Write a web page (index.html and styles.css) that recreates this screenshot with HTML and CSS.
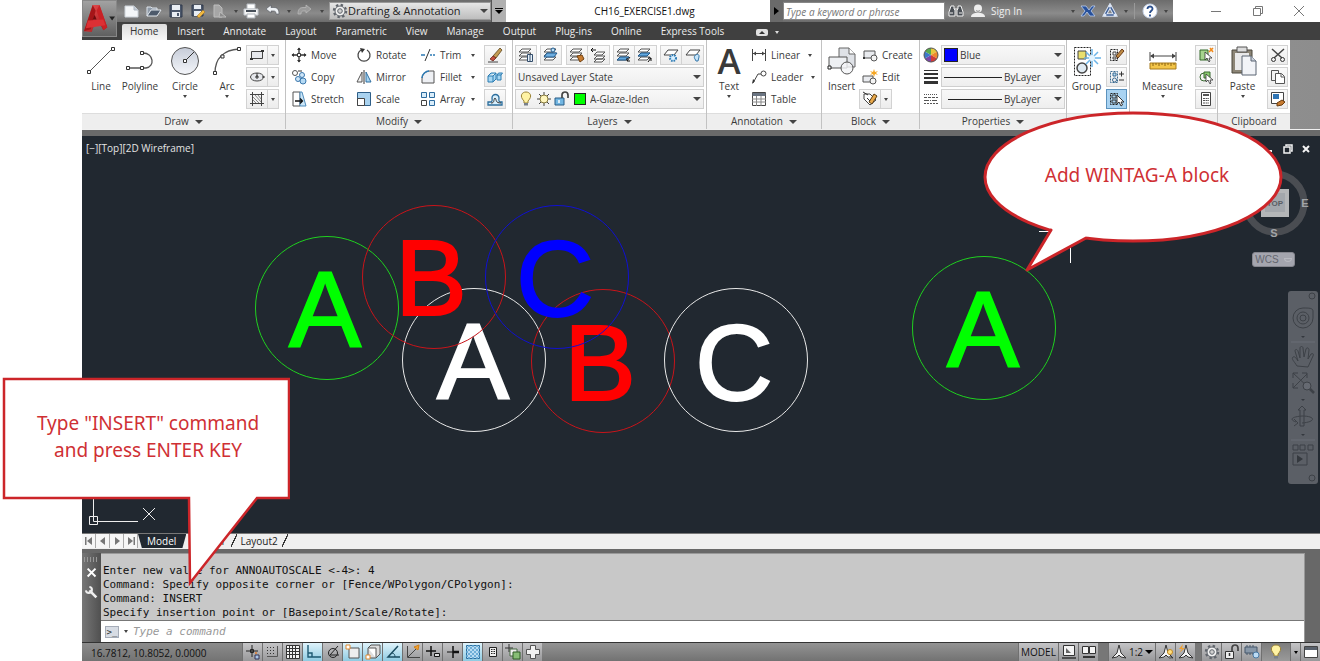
FILE: index.html
```html
<!DOCTYPE html>
<html lang="en">
<head>
<meta charset="utf-8">
<title>CH16_EXERCISE1.dwg</title>
<link rel="stylesheet" href="styles.css">
</head>
<body>
<svg class="defs" aria-hidden="true">
  <defs>
    <linearGradient id="gRed" x1="0" y1="0" x2="1" y2="1"><stop offset="0" stop-color="#f0585a"/><stop offset="1" stop-color="#9c0f12"/></linearGradient>
    <linearGradient id="gCirc" x1="0" y1="0" x2="0" y2="1"><stop offset="0" stop-color="#c6ccd8"/><stop offset="1" stop-color="#f4f6fa"/></linearGradient>
  </defs>
  <g>
    <symbol id="new" viewBox="0 0 16 16"><path d="M1 3h9l4 4v7H1z" fill="#f4f6f8" stroke="#ccd2d8"/><path d="M10 3v4h4" fill="#c2cad4" stroke="#aeb6c0"/></symbol>
    <symbol id="open" viewBox="0 0 16 16"><path d="M1 13V4h4l1 1h5v3" fill="#8f9aa8" stroke="#dde3ea"/><path d="M1 13l4-6h10l-4 6z" fill="#4d5a6b" stroke="#e4e9ef"/></symbol>
    <symbol id="save" viewBox="0 0 16 16"><path d="M2 2h12v12H2z" fill="#4c586c" stroke="#303b4c"/><path d="M4 2h8v5H4zM4 9h8v5H4z" fill="#e8edf3"/><path d="M9 10h2v3H9z" fill="#4c586c"/></symbol>
    <symbol id="saveas" viewBox="0 0 16 16"><path d="M2 2h11v11H2z" fill="#4c586c" stroke="#303b4c"/><path d="M4 2h7v4H4zM4 8h7v5H4z" fill="#e8edf3"/><path d="M7 13l6-6 2 2-6 6z" fill="#f0b840" stroke="#9a6a20" stroke-width=".5"/></symbol>
    <symbol id="plotdoc" viewBox="0 0 16 16"><path d="M2 2h5l3 3v9H2z" fill="#a6a6a6" stroke="#bdbdbd"/><path d="M8 9l6 5H7z" fill="#8c8c8c" stroke="#bbb"/></symbol>
    <symbol id="print" viewBox="0 0 16 16"><path d="M4 1h8v5H4z" fill="#fff" stroke="#b5bac0"/><path d="M1 6h14v6H1z" fill="#f4f4f4" stroke="#c4c9cf"/><path d="M3 7h10v2H3z" fill="#474f59"/><path d="M4 11h8v4H4z" fill="#fff" stroke="#abb0b6"/></symbol>
    <symbol id="undo" viewBox="0 0 16 16"><path d="M1 6l5-4v2.500h3c4 0 5 3 5 6.500h-3c0-2-.5-3-2.500-3H6V10z" fill="#eef1f4" stroke="#50565e" stroke-width=".6"/></symbol>
    <symbol id="redo" viewBox="0 0 16 16"><path d="M15 6l-5-4v2.500H7c-4 0-5 3-5 6.500h3c0-2 .5-3 2.500-3H10V10z" fill="#9a9a9a" stroke="#bdbdbd" stroke-width=".7"/></symbol>
    <symbol id="gear" viewBox="0 0 16 16"><circle cx="8" cy="8" r="6" stroke="#60656c" stroke-width="2.400" stroke-dasharray="2.350 2.350"/><circle cx="8" cy="8" r="5" fill="#f2f2f2" stroke="#60656c"/><circle cx="8" cy="8" r="2.300" fill="#d0d0d0" stroke="#60656c"/></symbol>
    <symbol id="binoc" viewBox="0 0 16 16"><path d="M3 3h3v3l1 1v6H1V9zM10 3h3l2 6v4H9V7l1-1z" fill="#4a4f55" stroke="#f2f2f2"/><path d="M6 6h4M2 10h3M11 10h3" stroke="#f2f2f2"/></symbol>
    <symbol id="person" viewBox="0 0 16 16"><circle cx="8" cy="5.500" r="4" fill="#eee"/><path d="M1 14c0-3 3-4 5-4h4c2 0 5 1 5 4z" fill="#eee"/><path d="M6 7.500c1 1 3 1 4 0" stroke="#888"/></symbol>
    <symbol id="exch" viewBox="0 0 16 16"><path d="M1 3h5l3 4 3-4h3l-4 5 4 5h-5L7 9l-3 4H1l4-5z" fill="#27509a" stroke="#b9cdf0" stroke-width=".8"/></symbol>
    <symbol id="a360" viewBox="0 0 16 16"><path d="M8 3L3 12h10z" stroke="#dce5f4" stroke-width="3.500"/><path d="M8 3L3 12h10z" stroke="#3f5f96" stroke-width="1.500"/><circle cx="8" cy="3" r="1.500" fill="#dce5f4"/><circle cx="3" cy="12" r="1.500" fill="#dce5f4"/><circle cx="13" cy="12" r="1.500" fill="#dce5f4"/></symbol>
    <symbol id="help" viewBox="0 0 16 16"><circle cx="8" cy="8" r="7" fill="#fff" stroke="#c7d4ea"/><path d="M5.500 6c0-3.500 5.300-3.300 5 0C10.300 7.800 8 7.800 8 10M8 11.500v2" stroke="#2a4f8e" stroke-width="1.900"/></symbol>

    <symbol id="line" viewBox="0 0 30 30"><path d="M3 26L26 3" stroke="#555"/><path d="M1.500 24.500h3v3h-3zM25.500 1.500h3v3h-3z" fill="#fff" stroke="#333"/></symbol>
    <symbol id="pline" viewBox="0 0 30 30"><path d="M3 22h18c9-1 8-15-3-15" stroke="#555" stroke-width="1.300"/><path d="M1.500 20.500h3v3h-3zM15.500 20.500h3v3h-3zM15.500 5.500h3v3h-3z" fill="#fff" stroke="#333"/></symbol>
    <symbol id="circle" viewBox="0 0 30 30"><circle cx="15" cy="15" r="13.500" fill="url(#gCirc)" stroke="#555"/><path d="M15 15l9-9" stroke="#333"/><path d="M13.500 13.500h3v3h-3z" fill="#fff" stroke="#333"/></symbol>
    <symbol id="arc" viewBox="0 0 30 30"><path d="M3 27C3 12 12 4 27 3" stroke="#555" stroke-width="1.300"/><path d="M1.500 25.500h3v3h-3zM9 9h3v3H9zM25.500 1.500h3v3h-3z" fill="#fff" stroke="#333"/></symbol>
    <symbol id="rect" viewBox="0 0 16 16"><path d="M2.500 4.500h11v7h-11z" fill="#e6e8ec" stroke="#444"/><path d="M1 11h3v2H1zM12 3h3v2h-3z" fill="#333"/></symbol>
    <symbol id="ellipse" viewBox="0 0 16 16"><ellipse cx="8" cy="8" rx="6.500" ry="4" fill="#e6e8ec" stroke="#444"/><path d="M8 8V4M6 8h4M8 6v4M13 8h3" stroke="#333"/></symbol>
    <symbol id="hatch" viewBox="0 0 16 16"><path d="M1 3.500h14M1 12.500h14M3.500 1v14M12.500 1v14" stroke="#444"/><path d="M4 6l6 6M4 9l3 3M6 4l6 7M9 4l3 4" stroke="#888"/></symbol>
    <symbol id="move" viewBox="0 0 16 16"><path d="M8 1v5M8 10v5M1 8h5M10 8h5" stroke="#333" stroke-width="1.300"/><path d="M6 3l2-2.500L10 3zM6 13l2 2.500 2-2.500zM3 6L.5 8 3 10zM13 6l2.500 2-2.500 2z" fill="#333"/><path d="M6.500 6.500h3v3h-3z" fill="#fff" stroke="#333"/></symbol>
    <symbol id="copy" viewBox="0 0 16 16"><circle cx="4" cy="4" r="2.500" stroke="#555"/><circle cx="11" cy="6" r="2.500" fill="#cfe6f8" stroke="#3b78ad"/><circle cx="7" cy="10" r="2.500" fill="#cfe6f8" stroke="#3b78ad"/><circle cx="12" cy="12" r="3" fill="#b5daf4" stroke="#3b78ad"/><path d="M7 2h4" stroke="#333"/></symbol>
    <symbol id="stretch" viewBox="0 0 16 16"><path d="M2 1h7v14H2z" fill="#fff" stroke="#555"/><path d="M9 1h2l4 14H9z" fill="#cde7f8" stroke="#4d8bbb"/><path d="M4 10h7M9 7.500l2.500 2.500L9 12.500" stroke="#111" stroke-width="1.300"/></symbol>
    <symbol id="rotate" viewBox="0 0 16 16"><path d="M5 3a6 6 0 1 0 6 0" stroke="#444" stroke-width="1.300"/><path d="M4 1l5 1-3 4z" fill="#333"/></symbol>
    <symbol id="mirror" viewBox="0 0 16 16"><path d="M6 3v10H1z" fill="#f4f4f4" stroke="#555"/><path d="M10 3v10h5z" fill="#a7d5f2" stroke="#2f6ea0"/><path d="M8 1v14" stroke="#333"/></symbol>
    <symbol id="scale" viewBox="0 0 16 16"><path d="M1.500 1.500h13v13h-13z" fill="#a9d2ef" stroke="#2f5f88"/><path d="M1.500 7.500h7v7h-7z" fill="#fff" stroke="#444"/></symbol>
    <symbol id="trim" viewBox="0 0 16 16"><path d="M1 8h4M10 8h2M13 8h2" stroke="#2c7ab4" stroke-width="1.400"/><path d="M5 14L10 2" stroke="#333"/></symbol>
    <symbol id="fillet" viewBox="0 0 16 16"><path d="M2 14V10c0-5 4-8 8-8h4v12z" fill="#eef0f4" stroke="#555"/><path d="M2 9c0-4 4-7 7-7" stroke="#2c7ab4" stroke-width="1.600"/></symbol>
    <symbol id="array" viewBox="0 0 16 16"><g fill="#d9edfa" stroke="#2c6b9e"><path d="M1.500 1.500h5v5h-5zM9.500 1.500h5v5h-5zM9.500 9.500h5v5h-5z"/><path d="M1.500 9.500h5v5h-5z" fill="#fff" stroke="#444"/></g></symbol>
    <symbol id="erase" viewBox="0 0 16 16"><path d="M13 1l2 2-6 8-3-2z" fill="#c39a52" stroke="#5c451c" stroke-width=".8"/><path d="M6 9l3 2-3 3-3-2z" fill="#c2503e" stroke="#70251b" stroke-width=".8"/><path d="M1 15h10" stroke="#444"/></symbol>
    <symbol id="explode" viewBox="0 0 16 16"><g fill="#a7d7f3" stroke="#2b7cb2"><path d="M1 7h5v6H1zM6 7l3-3v6l-3 3M1 7l3-3h5"/><path d="M10 6h4v5h-4zM14 6l1.500-2h-4L10 6"/></g></symbol>
    <symbol id="offset" viewBox="0 0 16 16"><path d="M1 14v-3h3c2-1 1-2 1-4a3.500 3.500 0 0 1 7 0c0 2-1 3 1 4h2v3z" fill="#d8effc" stroke="#2b6d9c" stroke-width="1.300"/><path d="M4 12c4 0 2-3 4-5 2 2 0 5 6 5" stroke="#333"/></symbol>
    <symbol id="layers" viewBox="0 0 16 16"><path d="M4 2h9l-3 3H1zM4 6h9l-3 3H1zM4 10h9l-3 3H1z" fill="#fff" stroke="#555"/></symbol>
    <symbol id="lprops" viewBox="0 0 16 16"><use href="#layers"/><path d="M9.500 7.500h5v7h-5z" fill="#e8f2fa" stroke="#334d6b"/><path d="M11 9h2M11 11h2M11 13h2" stroke="#334d6b"/></symbol>
    <symbol id="lcur" viewBox="0 0 16 16"><use href="#layers"/><path d="M4 6h10l-3 4H1z" fill="#6eaee0" stroke="#205a8e"/><circle cx="10" cy="3" r="2" fill="#bde0f7" stroke="#205a8e"/></symbol>
    <symbol id="lmatch" viewBox="0 0 16 16"><use href="#layers"/><path d="M8 9l5-1 2 4-4 3z" fill="#c77b30" stroke="#71400f"/></symbol>
    <symbol id="lprev" viewBox="0 0 16 16"><path d="M7 5h8l-3 3H4zM7 9h8l-3 3H4zM7 12h8l-3 3H4z" fill="#fff" stroke="#555"/><path d="M1 3h5M3 1L1 3l2 2" stroke="#111"/></symbol>
    <symbol id="liso" viewBox="0 0 16 16"><use href="#layers"/><path d="M4 10h9l-3 3H1z" fill="#64aae0" stroke="#205a8e"/><path d="M14 10l-3 4m0-3v3h3" stroke="#111"/></symbol>
    <symbol id="luniso" viewBox="0 0 16 16"><use href="#layers"/><path d="M4 6h9l-3 3H1z" fill="#64aae0" stroke="#205a8e"/><path d="M11 15l3-4m-3 0h3v3" stroke="#111"/></symbol>
    <symbol id="lfrz" viewBox="0 0 16 16"><path d="M5 3h10l-4 5H1z" fill="#fff" stroke="#444"/><circle cx="10" cy="11" r="3" fill="#d9f0ff" stroke="#2c7ab4" stroke-width="2" stroke-dasharray="1.500 1"/></symbol>
    <symbol id="loff" viewBox="0 0 16 16"><path d="M5 3h10l-4 5H1z" fill="#fff" stroke="#444"/><path d="M10 12c-3-4 5-7 4-2l-1 4h-2z" fill="#c7e5fa" stroke="#3477aa"/></symbol>
    <symbol id="bulb" viewBox="0 0 16 16"><path d="M6 10C1 5 4 1 8 1s7 4 2 9v2H6z" fill="#fff3a4" stroke="#9a8234"/><path d="M6 12h4v2.500H6z" fill="#78808a"/></symbol>
    <symbol id="sun" viewBox="0 0 16 16"><path d="M8 1v14M1 8h14M3 3l10 10M13 3L3 13" stroke="#444"/><circle cx="8" cy="8" r="4" fill="#fff6bd" stroke="#887b3c"/></symbol>
    <symbol id="unlock" viewBox="0 0 16 16"><path d="M1 7h9v7H1z" fill="#72b6e2" stroke="#285d86"/><path d="M8 7V4c0-4 6-4 6 0v3" stroke="#444" stroke-width="1.700"/><path d="M5 9v3" stroke="#fff" stroke-width="1.500"/></symbol>
    <symbol id="dim" viewBox="0 0 16 16"><path d="M1.500 2v12M14.500 2v12M2 6.500h12" stroke="#444"/><path d="M2 6.500l3-2v4zM14 6.500l-3-2v4z" fill="#444"/></symbol>
    <symbol id="leader" viewBox="0 0 16 16"><circle cx="12.500" cy="4.500" r="2.500" stroke="#444"/><path d="M10 5H7L2 14" stroke="#444"/><path d="M1 15l1-5 2 2z" fill="#333"/></symbol>
    <symbol id="table" viewBox="0 0 16 16"><path d="M1.500 1.500h13v13h-13z" fill="#fff" stroke="#444"/><path d="M1.500 2h13v3h-13z" fill="#6a7482"/><path d="M1 8h14M1 11h14M5.500 5v10M10 5v10" stroke="#888"/></symbol>
    <symbol id="insert" viewBox="0 0 30 30"><path d="M12 2h10l6 6v13H12z" fill="#dfe2e7" stroke="#666"/><path d="M22 2v6h6" fill="#fff" stroke="#666"/><path d="M2 11h18v11H2z" fill="#eef0f3" stroke="#555"/><circle cx="20" cy="22" r="6" fill="#f4f5f8" fill-opacity=".8" stroke="#555"/><path d="M1 20h3v3H1z" fill="#fff" stroke="#222"/></symbol>
    <symbol id="create" viewBox="0 0 16 16"><path d="M2 4h11v7H2z" fill="#e9ebef" stroke="#555"/><circle cx="12" cy="11" r="3" fill="#f4f4f4" stroke="#555"/><path d="M1 10h2v2H1z" fill="#333"/></symbol>
    <symbol id="bedit" viewBox="0 0 16 16"><path d="M1 7h10v6H1z" fill="#e9ebef" stroke="#555"/><circle cx="11" cy="12" r="3" fill="#f4f4f4" stroke="#555"/><path d="M12 0l1 3 3-1-2 2 2 2-3-1-1 3-1-3-3 1 2-2-2-2 3 1z" fill="#f5a623"/></symbol>
    <symbol id="attr" viewBox="0 0 16 16"><path d="M2 3h6l6 6-6 5-6-6z" fill="#fff" stroke="#444"/><path d="M7 11l5-8 3 2-5 8z" fill="#e9a94b" stroke="#5a3d12"/><path d="M1 1l5 3M5 7l3 3" stroke="#333"/></symbol>
    <symbol id="wheel" viewBox="0 0 16 16"><path d="M8 8V1a7 7 0 0 1 6 3.500z" fill="#e7c63c"/><path d="M8 8l6-3.500a7 7 0 0 1 0 7z" fill="#ee8a2c"/><path d="M8 8l6 3.500A7 7 0 0 1 8 15z" fill="#d13b38"/><path d="M8 8v7a7 7 0 0 1-6-3.500z" fill="#7a46a8"/><path d="M8 8l-6 3.500a7 7 0 0 1 0-7z" fill="#3c78c8"/><path d="M8 8L2 4.500A7 7 0 0 1 8 1z" fill="#58a84c"/><circle cx="8" cy="8" r="7" stroke="#555"/></symbol>
    <symbol id="lw" viewBox="0 0 16 16"><path d="M1 1.500h14" stroke="#333"/><path d="M1 5h14" stroke="#333" stroke-width="2"/><path d="M1 9h14" stroke="#333" stroke-width="2"/><path d="M1 13.500h14" stroke="#333" stroke-width="3"/></symbol>
    <symbol id="lt" viewBox="0 0 16 16"><path d="M1 3.500h14" stroke="#555" stroke-dasharray="1 1"/><path d="M1 6.500h14" stroke="#555" stroke-dasharray="3 1"/><path d="M1 9.500h14" stroke="#555" stroke-dasharray="5 1 1 1"/><path d="M1 12.500h14" stroke="#555" stroke-dasharray="2 1"/></symbol>
    <symbol id="group" viewBox="0 0 30 30"><path d="M2.500 1.500h16v28h-16z" stroke="#222" stroke-dasharray="2 1"/><path d="M6 5h8v8H6z" fill="#e9df6e" stroke="#444"/><circle cx="10" cy="22" r="5" fill="#dfeaf2" stroke="#444" stroke-width="1.500"/><path d="M20 3v18M12 12h17M14 6l12 12M26 6L14 18" stroke="#6bb4e8" stroke-width="1.500"/><circle cx="20" cy="12" r="3" fill="#e4f4ff"/></symbol>
    <symbol id="gedit" viewBox="0 0 16 16"><path d="M1.500 2.500h7v11h-7z" stroke="#222" stroke-dasharray="2 1"/><path d="M4 5h3v3H4zM4 10h3v2H4z" stroke="#444"/><path d="M7 9l6-7 2 2-6 7z" fill="#bd8a42" stroke="#6b3c1a"/></symbol>
    <symbol id="gpm" viewBox="0 0 16 16"><path d="M1.500 2.500h7v11h-7z" stroke="#3b6a90" stroke-dasharray="2 1"/><path d="M4 4h3v3H4z" fill="#b8dcf5" stroke="#3b6a90"/><circle cx="5.500" cy="11" r="2" stroke="#3b6a90"/><path d="M10 5h5M12.500 2.500v5M10 11h5" stroke="#333"/></symbol>
    <symbol id="gsel" viewBox="0 0 16 16"><path d="M1.500 2.500h7v11h-7z" stroke="#222" stroke-dasharray="2 1"/><path d="M3 4h4v3H3zM3 9h4v3H3z" stroke="#333"/><path d="M8 4v9l2-2 2 4 1.500-1-1.500-3h3z" fill="#fff" stroke="#333"/></symbol>
    <symbol id="measure" viewBox="0 0 30 30"><path d="M2 6v9M28 6v9M3 10h24" stroke="#444"/><path d="M2 10l4-2.500v5zM28 10l-4-2.500v5z" fill="#444"/><path d="M2 17h26v6H2z" fill="#f3c548" stroke="#a87a1a"/><path d="M5 17v3M8 17v2M11 17v3M14 17v2M17 17v3M20 17v2M23 17v3M26 17v2" stroke="#8a6210"/></symbol>
    <symbol id="qsel" viewBox="0 0 16 16"><path d="M2 3h8v10H2z" fill="#a6d48e" stroke="#356b2a"/><path d="M7 5v8l2-2 2 4 1-1-1-3h3z" fill="#fff" stroke="#333" stroke-width=".8"/><path d="M12 1l3 4M15 1l-4 4" stroke="#f08a1c" stroke-width="1.500"/></symbol>
    <symbol id="qall" viewBox="0 0 16 16"><circle cx="6" cy="8" r="4" stroke="#3a6a30"/><path d="M6 3h6v6H6z" fill="#8ccc70" stroke="#3a6a30"/><path d="M8 5v8l2-2 2 4 1-1-1-3h3z" fill="#fff" stroke="#333" stroke-width=".8"/></symbol>
    <symbol id="calc" viewBox="0 0 16 16"><path d="M3.500 1.500h9v13h-9z" fill="#fff" stroke="#444"/><path d="M5 4h6" stroke="#555" stroke-width="2"/><path d="M5 7.500h6M5 9.500h6M5 12h6" stroke="#555" stroke-dasharray="2 .6"/></symbol>
    <symbol id="paste" viewBox="0 0 30 30"><path d="M4 4h20v23H4z" fill="#8c8576" stroke="#4a463c"/><path d="M9 1h10v5H9z" fill="#ddd" stroke="#555"/><path d="M7 7h14v17H7z" fill="#e9e9ea"/><path d="M14 10h9l5 5v14H14z" fill="#f2f4f8" stroke="#5b6472"/><path d="M23 10v5h5" fill="#ccd3de" stroke="#5b6472"/></symbol>
    <symbol id="cut" viewBox="0 0 16 16"><path d="M2 2l10 9M14 2L4 11" stroke="#444" stroke-width="1.500"/><circle cx="3.500" cy="12.500" r="2" stroke="#333"/><circle cx="12.500" cy="12.500" r="2" stroke="#333"/></symbol>
    <symbol id="copyc" viewBox="0 0 16 16"><path d="M1.500 1.500h7v10h-7z" fill="#f4f4f4" stroke="#555"/><path d="M5.500 4.500h6l3 3v7h-9z" fill="#fff" stroke="#555"/><path d="M11 5v3h3" stroke="#555"/></symbol>
    <symbol id="matchp" viewBox="0 0 16 16"><path d="M1.500 1.500h12v11h-12z" fill="#fff" stroke="#444"/><path d="M3 3h6v5H3z" fill="#2e74b4"/><path d="M7 12l5-3 3 2-3 3-5 1z" fill="#c77b30" stroke="#6b3c0f"/></symbol>

    <symbol id="s1" viewBox="0 0 16 16"><path d="M7 1v12M1 7h12" stroke="#222"/><path d="M5.500 5.500h3v3h-3z" stroke="#222"/><circle cx="11" cy="9" r="1" fill="#e07c30"/><path d="M10 11h4v4h-4z" fill="#a9c5e8" stroke="#335"/></symbol>
    <symbol id="s2" viewBox="0 0 16 16"><path d="M2 3.500h9M2 6.500h9M2 9.500h9" stroke="#333" stroke-dasharray="1 2"/><path d="M12.500 2v10.500H2" stroke="#555"/></symbol>
    <symbol id="s3" viewBox="0 0 16 16"><path d="M1.500 1.500h13v13h-13z" fill="#f4f4f4" stroke="#333"/><path d="M1 4.500h14M1 7.500h14M1 10.500h14M4.500 1v14M7.500 1v14M10.500 1v14" stroke="#333"/></symbol>
    <symbol id="s4" viewBox="0 0 16 16"><path d="M3 1v12h13M3 9h4v4" stroke="#1d5972" stroke-width="1.400"/></symbol>
    <symbol id="s5" viewBox="0 0 16 16"><path d="M13 2L5 11h9" stroke="#222"/><circle cx="8" cy="9" r="4.500" stroke="#222"/></symbol>
    <symbol id="s6" viewBox="0 0 16 16"><path d="M4 4h10v10H4z" fill="#eee" stroke="#555"/><path d="M1 1h4v4H1z" fill="#fff" stroke="#df8a32"/></symbol>
    <symbol id="s7" viewBox="0 0 16 16"><path d="M3 4l3-3h9v9l-4 4H3z" fill="#ddd" stroke="#555"/><path d="M3 4h8v10" fill="#fff" stroke="#555"/><path d="M1 11h4v4H1z" fill="#fff" stroke="#df8a32"/></symbol>
    <symbol id="s8" viewBox="0 0 16 16"><path d="M13 2L3 13h12" stroke="#1b4c60" stroke-width="1.500"/><path d="M7 9c2 0 3 2 3 4" stroke="#1b4c60"/></symbol>
    <symbol id="s9" viewBox="0 0 16 16"><path d="M2.500 2v11.500H15M3 13l8-8" stroke="#444"/><path d="M9 3l5-2-1 5z" fill="#f0a030" stroke="#d08018"/></symbol>
    <symbol id="s10" viewBox="0 0 16 16"><path d="M6 2v10M1 7h10" stroke="#111" stroke-width="1.500"/><path d="M9.500 9.500h5v3h-5z" fill="#ddd" stroke="#111"/></symbol>
    <symbol id="s11" viewBox="0 0 16 16"><path d="M8 2v12" stroke="#111" stroke-width="1.500"/><path d="M2 8h6" stroke="#111"/><path d="M8 8h6" stroke="#111" stroke-width="2.500"/></symbol>
    <symbol id="s12" viewBox="0 0 16 16"><path d="M1.500 1.500h13v13h-13z" fill="#b9dcf2" stroke="#2c6f9e"/><path d="M1 5l4-4M1 9l8-8M1 13l12-12M3 15L15 3M7 15l8-8M11 15l4-4M11 1l4 4M7 1l8 8M3 1l12 12M1 3l12 12M1 7l8 8M1 11l4 4" stroke="#5aa2cf" stroke-width=".8"/></symbol>
    <symbol id="s13" viewBox="0 0 16 16"><path d="M4.500 3.500h7v9h-7z" fill="#eee" stroke="#222"/><path d="M6 5.500h4M6 7.500h4M6 9.500h4" stroke="#222" stroke-dasharray="1 .5"/></symbol>
    <symbol id="s14" viewBox="0 0 16 16"><path d="M4 0v8M0 4h8" stroke="#333"/><path d="M5 5h7v7H5z" fill="#eee" stroke="#476b42"/><path d="M8 8h7v7H8z" fill="#87bd76" stroke="#2f5c27"/></symbol>
    <symbol id="s15" viewBox="0 0 16 16"><path d="M5.500 1.500h5v4h4v5h-4v4h-5v-4h-4v-5h4z" fill="#f2f2f2" stroke="#555"/></symbol>
    <symbol id="m1" viewBox="0 0 16 16"><path d="M2.500 1.500h11v10h-11z" fill="#f4f4f4" stroke="#333"/><path d="M5 4l5 5H5z" fill="#666"/><path d="M1 14h14" stroke="#333" stroke-width="1.500"/></symbol>
    <symbol id="m2" viewBox="0 0 16 16"><path d="M1.500 2.500h6v7h-6zM8.500 2.500h6v7h-6z" fill="#f4f4f4" stroke="#333"/><path d="M2 13h12" stroke="#333" stroke-width="2"/></symbol>
    <symbol id="anno" viewBox="0 0 16 16"><path d="M8 1l2 8 5 5-5-1-2-2-2 2-5 1 5-5z" fill="#f6f6f6" stroke="#333"/></symbol>
    <symbol id="anno2" viewBox="0 0 16 16"><use href="#anno"/><circle cx="12" cy="8" r="2.500" fill="#ffe080" stroke="#c68a20"/><path d="M11 12h2v3h-2z" fill="#777"/></symbol>
    <symbol id="anno3" viewBox="0 0 16 16"><use href="#anno"/><path d="M5 0L1 5h3L1 9l6-5H4z" fill="#f0a030"/></symbol>
    <symbol id="chip" viewBox="0 0 16 16"><path d="M1 3h12v6H1z" fill="#8797a8" stroke="#44576a"/><path d="M3 1v10M6 1v10M9 1v10" stroke="#44576a" stroke-dasharray="2 6"/><circle cx="12" cy="11" r="3" fill="#bcdcf5" stroke="#4a7aa4"/></symbol>
    <symbol id="lock2" viewBox="0 0 16 16"><path d="M1.500 7.500h8v7h-8z" fill="#eee" stroke="#333"/><path d="M8 7V4c0-4 6-4 6 0v3" stroke="#444" stroke-width="1.700"/><path d="M5.500 9v3" stroke="#333" stroke-width="1.500"/></symbol>
    <symbol id="clean" viewBox="0 0 16 16"><path d="M1.500 2.500h13v11h-13z" fill="#fff" stroke="#444"/><path d="M2 3h12v3H2z" fill="#59616c"/></symbol>
    <symbol id="wrench" viewBox="0 0 16 16"><path d="M5 5l8 8" stroke="#eee" stroke-width="3"/><path d="M5 1a3.500 3.500 0 1 1-4 4" stroke="#eee" stroke-width="2.200"/></symbol>
  </g>
</svg>

<main class="app">
  <header class="head">
    <button class="appbtn" aria-label="Application menu"><svg viewBox="0 0 34 37"><path d="M1 31L10 4h7l8 23-4 3-4-7-5 1-3 8z" fill="url(#gRed)"/><path d="M1 31l9-27 3 6-5 19z" fill="#a51518"/><path d="M17 4l8 23-4 3-7-20z" fill="#c92125"/><path d="M5 20l16-1 2 6-20 3z" fill="#dc3034"/><path d="M12 14l2 5h-4z" fill="#6e0c0e"/><path d="M27 16h6l-3 4z" fill="#222"/></svg></button>
    <div class="headrows">
      <div class="titlebar">
        <div class="qat">
          <button class="ib" aria-label="New"><svg><use href="#new"/></svg></button>
          <button class="ib" aria-label="Open"><svg><use href="#open"/></svg></button>
          <button class="ib" aria-label="Save"><svg><use href="#save"/></svg></button>
          <button class="ib" aria-label="Save as"><svg><use href="#saveas"/></svg></button>
          <button class="ib" aria-label="Publish"><svg><use href="#plotdoc"/></svg></button>
          <span class="slot"><i class="arr"></i></span>
          <button class="ib" aria-label="Plot"><svg><use href="#print"/></svg></button>
          <button class="ib" aria-label="Undo"><svg><use href="#undo"/></svg></button>
          <span class="slot"><i class="arr"></i></span>
          <button class="ib" aria-label="Redo"><svg><use href="#redo"/></svg></button>
          <span class="slot wide"><i class="arr"></i></span>
        </div>
        <label class="workspace"><svg><use href="#gear"/></svg><select aria-label="Workspace"><option>Drafting &amp; Annotation</option></select><i class="arr big"></i></label>
        <button class="qmore" aria-label="Customize"><i class="bar"></i><i class="arr big"></i></button>
        <h1 class="doc">CH16_EXERCISE1.dwg</h1>
        <button class="sarrow" aria-label="Expand search"><i class="rt"></i></button>
        <input class="search" type="text" placeholder="Type a keyword or phrase" aria-label="Search">
        <div class="info">
          <button class="ib" aria-label="Find"><svg><use href="#binoc"/></svg></button>
          <button class="sign"><svg><use href="#person"/></svg>Sign In</button>
          <span class="slot push"><i class="arr"></i></span>
          <button class="ib" aria-label="Exchange"><svg><use href="#exch"/></svg></button>
          <button class="ib" aria-label="Autodesk 360"><svg><use href="#a360"/></svg></button>
          <span class="slot"><i class="arr"></i></span>
          <i class="vsep"></i>
          <button class="ib" aria-label="Help"><svg><use href="#help"/></svg></button>
          <span class="slot"><i class="arr"></i></span>
        </div>
        <div class="win">
          <button aria-label="Minimize"><svg viewBox="0 0 16 16"><path d="M3 8.500h10"/></svg></button>
          <button aria-label="Restore"><svg viewBox="0 0 16 16"><path d="M3.500 5.500h7v7h-7zM5.500 5V3.500h7v7H11"/></svg></button>
          <button aria-label="Close"><svg viewBox="0 0 16 16"><path d="M3 3l10 10M13 3L3 13"/></svg></button>
        </div>
      </div>
      <nav class="tabs">
        <a href="#" class="on">Home</a><a href="#">Insert</a><a href="#">Annotate</a><a href="#">Layout</a><a href="#">Parametric</a><a href="#">View</a><a href="#">Manage</a><a href="#">Output</a><a href="#">Plug-ins</a><a href="#">Online</a><a href="#">Express Tools</a>
        <button class="mini" aria-label="Minimize ribbon"><i class="pill"><i class="up"></i></i><i class="arr lt"></i></button>
      </nav>
    </div>
  </header>

  <section class="ribbon">
    <section class="panel draw">
      <div class="pbody">
        <button class="bigb"><svg><use href="#line"/></svg>Line</button>
        <button class="bigb"><svg><use href="#pline"/></svg>Polyline</button>
        <button class="bigb"><svg><use href="#circle"/></svg>Circle<i class="arr"></i></button>
        <button class="bigb"><svg><use href="#arc"/></svg>Arc<i class="arr"></i></button>
        <div class="stack">
          <button class="box split" aria-label="Rectangle"><svg><use href="#rect"/></svg><i class="arr"></i></button>
          <button class="box split" aria-label="Ellipse"><svg><use href="#ellipse"/></svg><i class="arr"></i></button>
          <button class="box split" aria-label="Hatch"><svg><use href="#hatch"/></svg><i class="arr"></i></button>
        </div>
      </div>
      <h2>Draw<i class="arr big"></i></h2>
    </section>
    <section class="panel modify">
      <div class="pbody">
        <div class="stack">
          <button class="tool"><svg><use href="#move"/></svg>Move</button>
          <button class="tool"><svg><use href="#copy"/></svg>Copy</button>
          <button class="tool"><svg><use href="#stretch"/></svg>Stretch</button>
        </div>
        <div class="stack">
          <button class="tool"><svg><use href="#rotate"/></svg>Rotate</button>
          <button class="tool"><svg><use href="#mirror"/></svg>Mirror</button>
          <button class="tool"><svg><use href="#scale"/></svg>Scale</button>
        </div>
        <div class="stack">
          <button class="tool"><svg><use href="#trim"/></svg>Trim<i class="arr end"></i></button>
          <button class="tool"><svg><use href="#fillet"/></svg>Fillet<i class="arr end"></i></button>
          <button class="tool"><svg><use href="#array"/></svg>Array<i class="arr end"></i></button>
        </div>
        <div class="stack">
          <button class="box" aria-label="Erase"><svg><use href="#erase"/></svg></button>
          <button class="box" aria-label="Explode"><svg><use href="#explode"/></svg></button>
          <button class="box" aria-label="Offset"><svg><use href="#offset"/></svg></button>
        </div>
      </div>
      <h2>Modify<i class="arr big"></i></h2>
    </section>
    <section class="panel layer">
      <div class="pbody stack">
        <div class="brow">
          <button class="box" aria-label="Layer properties"><svg><use href="#lprops"/></svg></button>
          <button class="box" aria-label="Make current"><svg><use href="#lcur"/></svg></button>
          <span class="pair"><button class="box" aria-label="Match layer"><svg><use href="#lmatch"/></svg></button><button class="box" aria-label="Previous"><svg><use href="#lprev"/></svg></button></span>
          <span class="pair"><button class="box" aria-label="Isolate"><svg><use href="#liso"/></svg></button><button class="box" aria-label="Unisolate"><svg><use href="#luniso"/></svg></button></span>
          <span class="pair"><button class="box" aria-label="Freeze"><svg><use href="#lfrz"/></svg></button><button class="box" aria-label="Off"><svg><use href="#loff"/></svg></button></span>
        </div>
        <label class="combo"><select aria-label="Layer state"><option>Unsaved Layer State</option></select><i class="arr big"></i></label>
        <label class="combo"><svg><use href="#bulb"/></svg><svg><use href="#sun"/></svg><svg><use href="#unlock"/></svg><i class="sw green"></i><select aria-label="Layer"><option>A-Glaze-Iden</option></select><i class="arr big"></i></label>
      </div>
      <h2>Layers<i class="arr big"></i></h2>
    </section>
    <section class="panel annot">
      <div class="pbody">
        <button class="bigb"><span class="bigA" aria-hidden="true">A</span>Text<i class="arr"></i></button>
        <div class="stack">
          <button class="tool"><svg><use href="#dim"/></svg>Linear<i class="arr near"></i></button>
          <button class="tool"><svg><use href="#leader"/></svg>Leader<i class="arr near"></i></button>
          <button class="tool"><svg><use href="#table"/></svg>Table</button>
        </div>
      </div>
      <h2>Annotation<i class="arr big"></i></h2>
    </section>
    <section class="panel block">
      <div class="pbody">
        <button class="bigb"><svg><use href="#insert"/></svg>Insert</button>
        <div class="stack">
          <button class="tool"><svg><use href="#create"/></svg>Create</button>
          <button class="tool"><svg><use href="#bedit"/></svg>Edit</button>
          <button class="box split" aria-label="Attributes"><svg><use href="#attr"/></svg><i class="arr"></i></button>
        </div>
      </div>
      <h2>Block<i class="arr big"></i></h2>
    </section>
    <section class="panel props">
      <div class="pbody stack">
        <div class="prow"><svg><use href="#wheel"/></svg><label class="combo"><i class="sw blue"></i><select aria-label="Color"><option>Blue</option></select><i class="arr big"></i></label></div>
        <div class="prow"><svg><use href="#lw"/></svg><label class="combo"><i class="rule"></i><select aria-label="Lineweight"><option>ByLayer</option></select><i class="arr big"></i></label></div>
        <div class="prow"><svg><use href="#lt"/></svg><label class="combo"><i class="rule in"></i><select aria-label="Linetype"><option>ByLayer</option></select><i class="arr big"></i></label></div>
      </div>
      <h2>Properties<i class="arr big"></i></h2>
    </section>
    <section class="panel groups">
      <div class="pbody">
        <button class="bigb"><svg><use href="#group"/></svg>Group</button>
        <div class="stack">
          <button class="box" aria-label="Ungroup"><svg><use href="#gedit"/></svg></button>
          <button class="box" aria-label="Group edit"><svg><use href="#gpm"/></svg></button>
          <button class="box sel" aria-label="Group selection"><svg><use href="#gsel"/></svg></button>
        </div>
      </div>
      <h2></h2>
    </section>
    <section class="panel util">
      <div class="pbody">
        <button class="bigb"><svg><use href="#measure"/></svg>Measure<i class="arr"></i></button>
        <div class="stack">
          <button class="box" aria-label="Quick select"><svg><use href="#qsel"/></svg></button>
          <button class="box" aria-label="Select all"><svg><use href="#qall"/></svg></button>
          <button class="box" aria-label="Calculator"><svg><use href="#calc"/></svg></button>
        </div>
      </div>
      <h2></h2>
    </section>
    <section class="panel clip">
      <div class="pbody">
        <button class="bigb"><svg><use href="#paste"/></svg>Paste<i class="arr"></i></button>
        <div class="stack">
          <button class="box" aria-label="Cut"><svg><use href="#cut"/></svg></button>
          <button class="box" aria-label="Copy clip"><svg><use href="#copyc"/></svg></button>
          <button class="box" aria-label="Match properties"><svg><use href="#matchp"/></svg></button>
        </div>
      </div>
      <h2>Clipboard</h2>
    </section>
  </section>

  <section class="canvas">
    <p class="vp">[−][Top][2D Wireframe]</p>
    <svg class="drawing" viewBox="82 136 1238 397" width="1238" height="397">
      <g stroke-width="1">
        <circle cx="327" cy="308" r="71.500" stroke="#1fd01f"/>
        <circle cx="474" cy="360" r="71.500" stroke="#e8e8e8"/>
        <circle cx="603" cy="361" r="71.500" stroke="#c8141a"/>
        <circle cx="736" cy="360" r="71.500" stroke="#e8e8e8"/>
        <circle cx="984" cy="328" r="71.500" stroke="#1fd01f"/>
      </g>
      <g class="glyph">
        <text x="325" y="347" fill="#0f0" stroke="#0f0">A</text>
        <text x="431" y="315" fill="#f00" stroke="#f00">B</text>
        <text x="473" y="399" fill="#fff" stroke="#fff">A</text>
        <text x="600" y="400" fill="#f00" stroke="#f00">B</text>
        <text x="734" y="400" fill="#fff" stroke="#fff">C</text>
        <text x="555" y="316" fill="#00f" stroke="#00f">C</text>
        <text x="983" y="367" fill="#0f0" stroke="#0f0">A</text>
      </g>
      <g>
        <circle cx="434" cy="277" r="71.500" stroke="#c8141a"/>
        <circle cx="557" cy="277" r="71.500" stroke="#1010d0"/>
        <path d="M93.500 496V521.500H138M89.500 516.500h8v8h-8zM143 508l12 12M155 508l-12 12" stroke="#eee"/>
        <path d="M1039 231.500h14M1070.500 243v20" stroke="#fff"/>
      </g>
    </svg>
    <div class="docwin">
      <button aria-label="Minimize drawing"><svg viewBox="0 0 12 12"><path d="M2 8h6" stroke-width="2"/></svg></button>
      <button aria-label="Restore drawing"><svg viewBox="0 0 12 12"><path d="M2 4h6v6H2zM4 3V2h6v6H9" stroke-width="1.500"/></svg></button>
      <button aria-label="Close drawing"><svg viewBox="0 0 12 12"><path d="M3 3l6 6M9 3l-6 6" stroke-width="2"/></svg></button>
    </div>
    <div class="cube">
      <svg viewBox="0 0 70 80"><circle cx="33" cy="35" r="29" stroke="#4a4d52" stroke-width="7"/><path d="M19 21h28v28H19z" fill="#b4b6b8"/><path d="M23 25h20v19H23z" fill="#a3a7ac"/><text x="33" y="38" class="t">TOP</text><text x="32" y="69" class="c">S</text><text x="63" y="39" class="c">E</text></svg>
      <button class="wcs">WCS<i></i></button>
    </div>
    <div class="navbar">
      <svg viewBox="0 0 30 193"><g stroke="#3d4147"><circle cx="24" cy="5" r="3"/><path d="M15 17c6 0 10 0 10 3v7a10 10 0 1 1-10-10z"/><circle cx="15" cy="27" r="6"/><circle cx="15" cy="27" r="3"/><path d="M3 51h24M3 149h24" stroke="#6b6f76"/><path d="M9 75c-3-5-6-7-4-9 2-1 3 1 5 4L7 60c0-2 2-2 3 0l2 7V57c0-2 3-2 3 0l1 9 2-8c1-2 3-1 3 1l-1 9 3-5c2-1 3 0 2 2l-5 11z"/><path d="M5 82l16 15M5 97l14-14M5 87v-5h5M14 82h5v5M5 92v5h5"/><circle cx="19" cy="95" r="4" fill="#666a72"/><path d="M22 98l4 4" stroke-width="2.500"/><path d="M12 135v-16h-2l4-4 4 4h-2v16zM8 131c-6-2-6-5 6-6 14 0 14 6 0 7M6 128l4 4-4 3"/><path d="M5 154h5v5H5zM12 154h5v5h-5zM20 154h5v5h-5zM5 162h14v12H5z"/><circle cx="24" cy="187" r="3"/></g><path d="M13 45h4l-2 2zM13 108h4l-2 2zM13 143h4l-2 2zM9 164l6 4-6 4z" fill="#34383e"/></svg>
    </div>
  </section>

  <nav class="ltabs">
    <button aria-label="First"><svg viewBox="0 0 12 12"><path d="M2 2h1.500v8H2zM9 2v8L4 6z"/></svg></button>
    <button aria-label="Previous"><svg viewBox="0 0 12 12"><path d="M8 2v8L3 6z"/></svg></button>
    <button aria-label="Next"><svg viewBox="0 0 12 12"><path d="M4 2v8l5-4z"/></svg></button>
    <button aria-label="Last"><svg viewBox="0 0 12 12"><path d="M3 2v8l5-4zM8.500 2H10v8H8.500z"/></svg></button>
    <a href="#" class="model">Model</a><a href="#" class="first">Layout1</a><i class="slash"></i><a href="#">Layout2</a><i class="slash"></i>
  </nav>

  <section class="cmd">
    <div class="side"><i class="grip"></i><button aria-label="Close command line"><svg viewBox="0 0 16 16"><path d="M3 3l9 9M12 3l-9 9" stroke="#fff" stroke-width="2.200"/></svg></button><button aria-label="Customize command line"><svg viewBox="0 0 16 16"><use href="#wrench"/></svg></button></div>
    <div class="cmain">
      <pre class="hist">Enter new value for ANNOAUTOSCALE &lt;-4&gt;: 4
Command: Specify opposite corner or [Fence/WPolygon/CPolygon]:
Command: INSERT
Specify insertion point or [Basepoint/Scale/Rotate]:</pre>
      <label class="entry"><span class="prompt">&gt;_</span><i class="arr"></i><input type="text" placeholder="Type a command" aria-label="Command"></label>
    </div>
  </section>

  <footer class="status">
    <span class="coords">16.7812, 10.8052, 0.0000</span>
    <button aria-label="Infer"><svg><use href="#s1"/></svg></button>
    <button aria-label="Snap"><svg><use href="#s2"/></svg></button>
    <button aria-label="Grid"><svg><use href="#s3"/></svg></button>
    <button class="on" aria-label="Ortho"><svg><use href="#s4"/></svg></button>
    <button aria-label="Polar"><svg><use href="#s5"/></svg></button>
    <button class="on" aria-label="Object snap"><svg><use href="#s6"/></svg></button>
    <button class="on" aria-label="3D snap"><svg><use href="#s7"/></svg></button>
    <button class="on" aria-label="Tracking"><svg><use href="#s8"/></svg></button>
    <button aria-label="Dynamic UCS"><svg><use href="#s9"/></svg></button>
    <button aria-label="Dynamic input"><svg><use href="#s10"/></svg></button>
    <button aria-label="Lineweight"><svg><use href="#s11"/></svg></button>
    <button class="on" aria-label="Transparency"><svg><use href="#s12"/></svg></button>
    <button aria-label="Quick properties"><svg><use href="#s13"/></svg></button>
    <button aria-label="Selection cycling"><svg><use href="#s14"/></svg></button>
    <button aria-label="Annotation monitor"><svg><use href="#s15"/></svg></button>
    <span class="fill"></span>
    <button class="txt">MODEL</button>
    <button aria-label="Quick view layouts"><svg><use href="#m1"/></svg></button>
    <button aria-label="Quick view drawings"><svg><use href="#m2"/></svg></button>
    <i class="gap"></i>
    <button class="txt ratio"><svg><use href="#anno"/></svg>1:2<i class="arr big"></i></button>
    <button aria-label="Annotation visibility"><svg><use href="#anno2"/></svg></button>
    <button aria-label="Add scales"><svg><use href="#anno3"/></svg></button>
    <i class="gap sm"></i>
    <button aria-label="Workspace switching"><svg><use href="#gear"/></svg></button>
    <button aria-label="Lock"><svg><use href="#lock2"/></svg></button>
    <button aria-label="Hardware"><svg><use href="#chip"/></svg></button>
    <button class="lamp" aria-label="Isolate objects"><svg><use href="#bulb"/></svg></button>
    <button class="thin" aria-label="Status menu"><i class="arr"></i></button>
    <button aria-label="Clean screen"><svg><use href="#clean"/></svg></button>
  </footer>
</main>

<aside class="callout one">
  <svg viewBox="0 0 290 212"><path d="M4 4h285v119h-32L190 208l-1-85H4z" fill="#fff" stroke="#cc2529" stroke-width="2.500"/></svg>
  <p>Type "INSERT" command<br>and press ENTER KEY</p>
</aside>
<aside class="callout two">
  <svg viewBox="0 0 300 164"><ellipse cx="150" cy="68" rx="148" ry="64" fill="#fff" stroke="#cc2529" stroke-width="3"/><path d="M68 121L75 112l35 8-7 9-59 32z" fill="#fff"/><path d="M68 121L44 161l59-32" stroke="#cc2529" stroke-width="3" stroke-linejoin="round" stroke-linecap="round"/></svg>
  <p>Add WINTAG-A block</p>
</aside>
</body>
</html>
```

FILE: styles.css
```css
* { box-sizing: border-box; }
body {
  margin: 0;
  position: relative;
  background: #fff;
  font: 10px/14px "Open Sans", "Noto Sans", sans-serif;
  color: #3a3a3a;
  overflow: hidden;
}
button, input, select { font: inherit; color: inherit; border: 0; padding: 0; margin: 0; background: none; border-radius: 0; }
button { display: flex; align-items: center; justify-content: center; }
select { appearance: none; flex: 1; min-width: 0; outline: 0; }
svg { width: 16px; height: 16px; flex: none; display: block; fill: none; }
a { color: inherit; text-decoration: none; }
h1, h2, p, pre { margin: 0; font-weight: 400; font-size: 10px; }
i { font-style: normal; flex: none; }
.defs { position: absolute; width: 0; height: 0; }

.app { margin-left: 82px; height: 100vh; display: flex; flex-direction: column; }
.arr { border: 2px solid transparent; border-top: 3px solid #444; border-bottom: 0; }
.arr.big { border-width: 4px 4px 0; }
.arr.lt { border-top-color: #ddd; }

.head { display: flex; height: 40px; background: #404040; }
.appbtn { width: 35px; height: 37px; background: linear-gradient(#a2a2a2, #606060); border: 1px solid #888; }
.appbtn svg { width: 33px; height: 36px; }
.headrows { flex: 1; min-width: 0; }
.titlebar { display: flex; height: 22px; background: linear-gradient(#6c6c6c, #8b8b8b 60%, #6b6b6b); }
.qat { display: flex; padding-left: 4px; }
.ib { width: 22px; }
.slot { width: 9px; display: flex; align-items: center; justify-content: center; }
.slot.wide { width: 14px; }
.workspace { width: 162px; margin: 2px 0; background: linear-gradient(#e6e6e6, #bdbdbd); display: flex; align-items: center; padding: 0 2px; border: 1px solid #999; font-size: 11px; color: #222; }
.qmore { width: 15px; background: #b0b0b0; flex-direction: column; border-left: 1px solid #555; gap: 1px; }
.qmore .arr { border-top-color: #000; }
.bar { width: 8px; height: 1px; background: #000; }
.doc { flex: 1; background: #fff; text-align: center; line-height: 22px; color: #111; padding-left: 13px; }
.sarrow { width: 13px; background: #6a6a6a; }
.rt { border: 4px solid transparent; border-left: 5px solid #000; border-right: 0; }
.search { width: 162px; margin: 2px 0; background: #fff; border: 1px solid #888; padding: 2px 2px 0; font-style: italic; }
.search::placeholder { color: #777; opacity: 1; }
.info { width: 228px; display: flex; align-items: center; color: #eee; padding-right: 3px; }
.info .ib { height: 22px; }
.sign { gap: 5px; padding-left: 3px; }
.push { margin-left: auto; }
.vsep { width: 1px; height: 16px; background: #999; margin: 0 4px; }
.win { width: 147px; display: flex; background: #fff; padding-left: 22px; }
.win button { width: 42px; }
.win svg { stroke: #777; }

.tabs { display: flex; height: 18px; align-items: flex-end; color: #ececec; padding-left: 5px; }
.tabs a { padding: 0 10px 0 9px; line-height: 15px; height: 16px; }
.tabs a.on { background: linear-gradient(#dcdcdc, #f6f6f6); color: #333; padding: 0 9px 0 8px; margin-right: 1px; border-radius: 2px 2px 0 0; }
.mini { height: 16px; margin-left: 22px; gap: 7px; }
.pill { width: 12px; height: 7px; background: #e0e0e0; border-radius: 2px; display: flex; align-items: center; justify-content: center; }
.up { border: 3px solid transparent; border-bottom: 3px solid #333; border-top: 0; }

.ribbon { display: flex; height: 96px; background: linear-gradient(90deg, #b4b4b4, #8d8d8d); border-bottom: 6px solid #6a6a6a; box-shadow: inset 0 -1px #f0f0f0; }
.panel { background: #fff; border-right: 1px solid #c2c2c2; display: flex; flex-direction: column; margin-bottom: 1px; }
.pbody { flex: 1; display: flex; padding-top: 5px; }
.panel h2 { height: 16px; line-height: 15px; background: #eee; border-top: 1px solid #ddd; display: flex; align-items: center; justify-content: center; gap: 6px; }
.draw { width: 204px; }
.modify { width: 227px; }
.layer { width: 194px; }
.annot { width: 115px; }
.block { width: 98px; }
.props { width: 147px; }
.groups { width: 63px; }
.util { width: 88px; }
.clip { width: 72px; border-right: 0; }

.bigb { flex-direction: column; justify-content: flex-start; padding-top: 1px; }
.bigb svg { width: 30px; height: 30px; margin-bottom: 3px; }
.bigb .arr { margin-top: 2px; }
.bigA { font: 600 35px/30px "Open Sans", sans-serif; height: 30px; margin-bottom: 3px; }
.stack { display: flex; flex-direction: column; }
.stack > * { margin-bottom: 2px; height: 20px; }
.tool { justify-content: flex-start; gap: 4px; }
.tool .end { margin-left: auto; margin-right: 9px; }
.tool .near { margin-left: 4px; }
.box { width: 22px; height: 20px; background: linear-gradient(#fafafa, #ececec); border: 1px solid #d2d2d2; }
.box.sel { background: #a9d3f2; border-color: #5b92bd; }
.box.split { width: 33px; justify-content: space-between; padding: 0 3px 0 2px; background: linear-gradient(90deg, transparent 20px, #d2d2d2 20px, #d2d2d2 21px, transparent 21px), linear-gradient(#fafafa, #ececec); }

.draw .bigb:nth-child(1) { width: 38px; }
.draw .bigb:nth-child(2) { width: 40px; }
.draw .bigb:nth-child(3) { width: 50px; }
.draw .bigb:nth-child(4) { width: 34px; margin-right: 2px; }
.modify .pbody { padding-left: 5px; }
.modify .stack:nth-child(1) { width: 65px; }
.modify .stack:nth-child(2), .modify .stack:nth-child(3) { width: 64px; }
.layer .pbody { padding-left: 2px; padding-right: 2px; }
.brow { display: flex; justify-content: space-between; }
.pair { display: flex; }
.pair .box + .box { border-left: 0; }
.combo { display: flex; align-items: center; border: 1px solid #cfcfcf; background: linear-gradient(#f8f8f8, #eee); padding: 0 2px; gap: 2px; min-width: 0; }
.sw { width: 12px; height: 12px; border: 1px solid #222; margin: 0 2px; }
.green { background: #0f0; }
.blue { background: #00f; width: 14px; height: 14px; margin: 0; }
.annot .bigb { width: 44px; }
.block .bigb { width: 39px; }
.block .stack .box { margin-left: -2px; }
.block .tool { padding-left: 1px; }
.props .pbody { padding: 5px 1px 0 3px; }
.prow { display: flex; align-items: center; gap: 2px; }
.prow .combo { flex: 1; height: 20px; }
.rule { width: 58px; height: 1px; background: #222; }
.rule.in { width: 54px; margin-left: 4px; }
.groups .bigb, .clip .bigb { width: 39px; }
.groups .box, .util .box, .clip .box { width: 21px; }
.util .bigb { width: 65px; }
.clip .bigb { width: 49px; }

.canvas { flex: 1; min-height: 0; position: relative; background: #212830; overflow: hidden; }
.vp { color: #e4e4e4; padding: 5px 4px; }
.drawing { position: absolute; left: 0; top: 0; width: 1238px; height: 397px; }
.glyph text { font: 108px "Liberation Sans", Arial, sans-serif; text-anchor: middle; stroke-width: 2px; }
.docwin { position: absolute; right: 5px; top: 7px; display: flex; }
.docwin button { width: 18px; }
.docwin svg { width: 12px; height: 12px; stroke: #f4f4f4; }
.cube { position: absolute; right: 8px; top: 32px; width: 70px; }
.cube svg { width: 70px; height: 80px; }
.cube text { text-anchor: middle; font-family: "Liberation Sans", Arial, sans-serif; font-weight: 700; }
.cube .t { font-size: 8px; fill: #5a5f66; }
.cube .c { font-size: 11px; fill: #a2a5a8; }
.wcs { width: 43px; height: 15px; margin: 4px 0 0 10px; border-radius: 3px; background: #a4a5ae; border: 1px solid #85868e; color: #63656e; gap: 5px; font-family: "Liberation Sans", Arial, sans-serif; }
.wcs i { width: 8px; height: 4px; border: 1px solid #b9bac1; border-radius: 0 0 4px 4px; }
.navbar { position: absolute; right: 2px; top: 155px; background: #5b5f66; border-radius: 3px; }
.navbar svg { width: 30px; height: 193px; }

.ltabs { height: 20px; display: flex; background: #efefef; border-bottom: 4px solid #686868; border-top: 1px solid #777; color: #222; }
.ltabs button { width: 14px; background: #f6f6f6; border-right: 1px solid #aaa; height: 14px; }
.ltabs svg { width: 12px; height: 12px; fill: #777; }
.ltabs a { line-height: 14px; height: 14px; padding: 0 4px; }
.ltabs .model { background: #212830; color: #fff; padding: 0 10px 0 9px; clip-path: polygon(0 0, 100% 0, 92% 100%, 8% 100%); }
.ltabs .first { padding: 0 5px 0 2px; }
.slash { width: 6px; height: 13px; background: linear-gradient(115deg, transparent 44%, #333 45%, #333 55%, transparent 56%); }

.cmd { height: 89px; display: flex; background: #686868; padding-right: 15px; }
.side { width: 19px; background: linear-gradient(90deg, #777, #505050); display: flex; flex-direction: column; align-items: center; gap: 4px; padding-top: 4px; }
.grip { width: 15px; height: 5px; background: repeating-linear-gradient(90deg, #999 0 1px, transparent 1px 3px); }
.side svg { width: 14px; height: 14px; }
.side button { margin-bottom: 2px; }
.cmain { flex: 1; display: flex; flex-direction: column; border: 1px solid #999; border-width: 1px 1px 0 0; background: #c8c8c8; min-width: 0; }
.hist { flex: 1; display: flex; align-items: flex-end; padding: 0 2px; font: 11px/14px "DejaVu Sans Mono", monospace; color: #111; overflow: hidden; }
.entry { height: 22px; background: #fff; border-top: 1px solid #777; display: flex; align-items: center; gap: 5px; padding-left: 4px; }
.prompt { width: 14px; height: 12px; font: 9px/11px "DejaVu Sans Mono", monospace; background: #d7dce4; border: 1px solid #a5acb8; color: #333; text-align: center; }
.entry input { flex: 1; font: italic 11px/14px "DejaVu Sans Mono", monospace; outline: 0; }
.entry input::placeholder { color: #999; opacity: 1; }

.status { height: 19px; display: flex; background: linear-gradient(#a0a0a0, #757575); border-top: 1px solid #333; color: #111; }
.coords { width: 160px; padding-left: 9px; line-height: 20px; background: linear-gradient(#8c8c8c, #737373); }
.status button { width: 20px; background: linear-gradient(#c4c4c6, #98989a); border-left: 1px solid #707070; }
.status .on { background: linear-gradient(#dff3fb, #8fcbe2); }
.status .txt { width: 40px; }
.status .ratio { width: 47px; gap: 2px; }
.ratio .arr, .thin .arr { border-top-color: #000; }
.status .thin { width: 10px; }
.status .lamp { width: 29px; background: linear-gradient(#7d7d7d, #9a9a9a); }
.fill { flex: 1; background: linear-gradient(#939393, #727272); }
.gap { width: 10px; background: #777; }
.gap.sm { width: 6px; }

.callout { position: absolute; color: #cf3034; font: 19px/27px "Noto Sans", "Open Sans", sans-serif; text-align: center; }
.callout svg { position: absolute; left: 0; top: 0; width: 100%; height: 100%; }
.callout p { position: relative; font-size: 19px; }
.one { left: 0; top: 375px; width: 290px; height: 212px; padding: 35px 0 0 6px; }
.two { right: 37px; top: 109px; width: 300px; height: 164px; padding-top: 53px; padding-left: 8px; }
```
